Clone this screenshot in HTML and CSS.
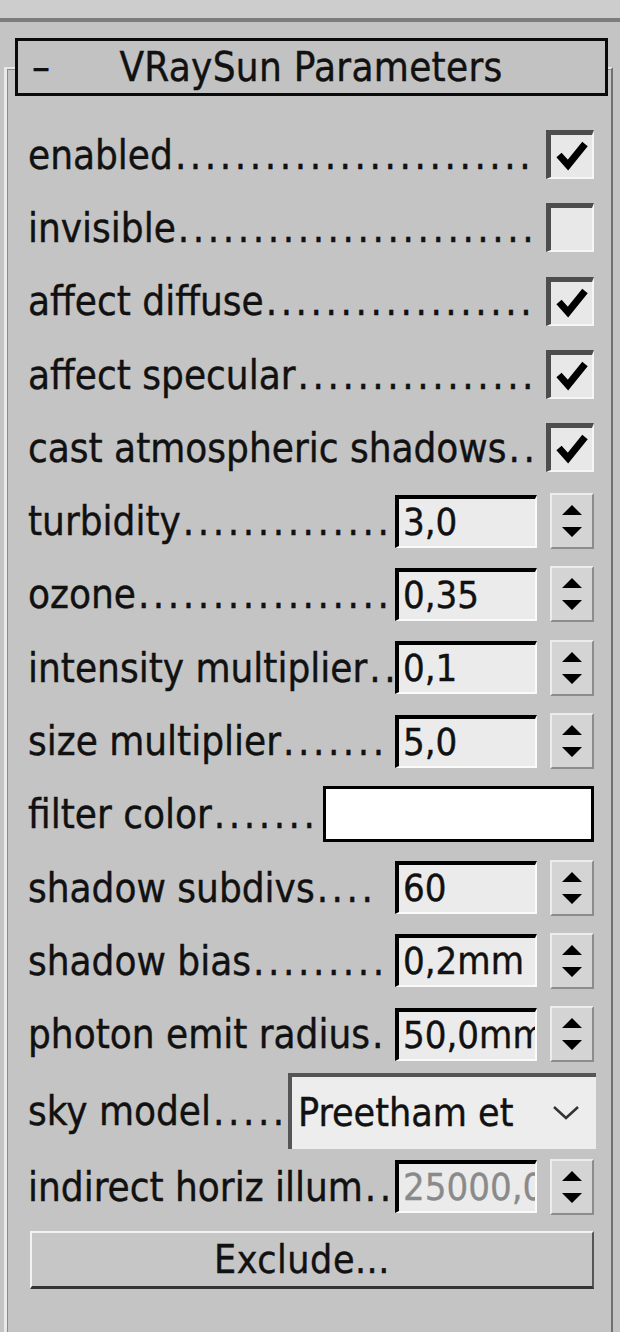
FILE: index.html
```html
<!DOCTYPE html>
<html>
<head>
<meta charset="utf-8">
<link rel="stylesheet" href="styles.css">
</head>
<body>
<div class="topbar"></div>
<div class="rollout">
  <div class="header"><span class="minus">–</span><span class="title">VRaySun Parameters</span></div>
  <div class="rows">
    <div class="row">
      <div class="label">enabled<span class="dots">........................</span></div>
      <div class="check"><svg viewBox="0 0 40 40" width="40" height="40"><path d="M7 19 L16 29 L33 8" fill="none" stroke="#000" stroke-width="7"/></svg></div>
    </div>
    <div class="row">
      <div class="label">invisible<span class="dots">........................</span></div>
      <div class="check"></div>
    </div>
    <div class="row">
      <div class="label">affect diffuse<span class="dots">..................</span></div>
      <div class="check"><svg viewBox="0 0 40 40" width="40" height="40"><path d="M7 19 L16 29 L33 8" fill="none" stroke="#000" stroke-width="7"/></svg></div>
    </div>
    <div class="row">
      <div class="label">affect specular<span class="dots">................</span></div>
      <div class="check"><svg viewBox="0 0 40 40" width="40" height="40"><path d="M7 19 L16 29 L33 8" fill="none" stroke="#000" stroke-width="7"/></svg></div>
    </div>
    <div class="row">
      <div class="label">cast atmospheric shadows<span class="dots">..</span></div>
      <div class="check"><svg viewBox="0 0 40 40" width="40" height="40"><path d="M7 19 L16 29 L33 8" fill="none" stroke="#000" stroke-width="7"/></svg></div>
    </div>
    <div class="row">
      <div class="label narrow">turbidity<span class="dots">..............</span></div>
      <div class="field">3,0</div>
      <div class="spin"><svg viewBox="0 0 40 52" width="40" height="52"><path d="M10 20 H30 L20 10 Z M10 32 H30 L20 42 Z" fill="#000"/></svg></div>
    </div>
    <div class="row">
      <div class="label narrow">ozone<span class="dots">.................</span></div>
      <div class="field">0,35</div>
      <div class="spin"><svg viewBox="0 0 40 52" width="40" height="52"><path d="M10 20 H30 L20 10 Z M10 32 H30 L20 42 Z" fill="#000"/></svg></div>
    </div>
    <div class="row">
      <div class="label narrow">intensity multiplier<span class="dots">..</span></div>
      <div class="field">0,1</div>
      <div class="spin"><svg viewBox="0 0 40 52" width="40" height="52"><path d="M10 20 H30 L20 10 Z M10 32 H30 L20 42 Z" fill="#000"/></svg></div>
    </div>
    <div class="row">
      <div class="label narrow">size multiplier<span class="dots">.......</span></div>
      <div class="field">5,0</div>
      <div class="spin"><svg viewBox="0 0 40 52" width="40" height="52"><path d="M10 20 H30 L20 10 Z M10 32 H30 L20 42 Z" fill="#000"/></svg></div>
    </div>
    <div class="row">
      <div class="label">filter color<span class="dots">.......</span></div>
      <div class="swatch"></div>
    </div>
    <div class="row">
      <div class="label narrow">shadow subdivs<span class="dots">....</span></div>
      <div class="field">60</div>
      <div class="spin"><svg viewBox="0 0 40 52" width="40" height="52"><path d="M10 20 H30 L20 10 Z M10 32 H30 L20 42 Z" fill="#000"/></svg></div>
    </div>
    <div class="row">
      <div class="label narrow">shadow bias<span class="dots">.........</span></div>
      <div class="field">0,2mm</div>
      <div class="spin"><svg viewBox="0 0 40 52" width="40" height="52"><path d="M10 20 H30 L20 10 Z M10 32 H30 L20 42 Z" fill="#000"/></svg></div>
    </div>
    <div class="row">
      <div class="label narrow">photon emit radius<span class="dots">.</span></div>
      <div class="field">50,0mm</div>
      <div class="spin"><svg viewBox="0 0 40 52" width="40" height="52"><path d="M10 20 H30 L20 10 Z M10 32 H30 L20 42 Z" fill="#000"/></svg></div>
    </div>
    <div class="row sky">
      <div class="label">sky model<span class="dots">.....</span></div>
      <div class="dropdown"><span class="dd-text">Preetham et</span><svg class="chev" viewBox="0 0 28 16" width="28" height="16"><path d="M2 2 L14 13 L26 2" fill="none" stroke="#333" stroke-width="2.5"/></svg></div>
    </div>
    <div class="row short">
      <div class="label narrow">indirect horiz illum<span class="dots">..</span></div>
      <div class="field disabled">25000,0</div>
      <div class="spin"><svg viewBox="0 0 40 52" width="40" height="52"><path d="M10 20 H30 L20 10 Z M10 32 H30 L20 42 Z" fill="#000"/></svg></div>
    </div>
    <div class="btn-row">
      <div class="button">Exclude...</div>
    </div>
  </div>
</div>
</body>
</html>
```
FILE: styles.css
```css
html, body {
  margin: 0;
  padding: 0;
}
body {
  width: 620px;
  height: 1332px;
  overflow: hidden;
  background: #c4c4c4;
  font-family: "DejaVu Sans Condensed", "Liberation Sans", sans-serif;
  font-size: 40px;
  color: #111;
  -webkit-text-stroke: 0.4px #111;
}
.topbar {
  height: 18px;
  background: #cdcdcd;
  border-bottom: 4px solid #7d7d7d;
}
.rollout {
  margin: 45px 7px 0 4px;
  border-top: 2px solid #e6e6e6;
  border-left: 3px solid #e9e9e9;
  border-right: 2px solid #707070;
  height: 1300px;
  box-shadow: inset 1px 1px 0 #8a8a8a;
}
.header {
  margin: -31px 3px 0 8px;
  height: 52px;
  border: 3px solid #0a0a0a;
  background: #c2c2c2;
  display: flex;
  align-items: center;
}
.minus {
  padding-left: 14px;
  width: 60px;
}
.title {
  flex: 1;
  text-align: center;
  padding-right: 75px;
  letter-spacing: 0.3px;
}
.rows {
  padding: 22px 17px 0 21px;
}
.row {
  height: 73.3px;
  display: flex;
  align-items: center;
}
.row.sky {
  height: 80px;
}
.row.short {
  height: 72px;
}
.label {
  flex: 1 1 0;
  min-width: 0;
  white-space: nowrap;
  margin-right: 8px;
}
.label.narrow {
  margin-right: 3px;
}
.dots {
  letter-spacing: 3.55px;
  margin-left: 2px;
}
.check {
  width: 41px;
  height: 42px;
  background: #e8e8e8;
  border-top: 5px solid #4d4d4d;
  border-left: 5px solid #4d4d4d;
  border-right: 2px solid #f6f6f6;
  border-bottom: 2px solid #f6f6f6;
  display: flex;
  align-items: center;
  justify-content: center;
}
.field {
  width: 132px;
  height: 47px;
  line-height: 47px;
  background: #ebebeb;
  border-top: 4px solid #000;
  border-left: 4px solid #000;
  border-right: 2px solid #fafafa;
  border-bottom: 2px solid #fafafa;
  padding-left: 4px;
  white-space: nowrap;
  overflow: hidden;
  font-size: 38px;
}
.field.disabled {
  color: #8a8a8a;
  -webkit-text-stroke: 0.3px #8a8a8a;
}
.spin {
  width: 40px;
  height: 52px;
  margin-left: 13px;
  background: #d4d4d4;
  border-top: 2px solid #ececec;
  border-left: 2px solid #ececec;
  border-right: 2px solid #8c8c8c;
  border-bottom: 2px solid #8c8c8c;
}
.spin svg {
  display: block;
}
.swatch {
  width: 265px;
  height: 50px;
  background: #fff;
  border: 3px solid #000;
}
.dropdown {
  width: 304px;
  height: 72px;
  margin-right: -2px;
  background: #ededed;
  border-top: 4px solid #555;
  border-left: 4px solid #555;
  display: flex;
  align-items: center;
}
.dd-text {
  padding-left: 6px;
  white-space: nowrap;
  width: 228px;
  font-size: 39px;
}
.chev {
  margin-left: 26px;
  flex: none;
}
.btn-row {
  padding-top: 8px;
  padding-left: 2px;
}
.button {
  height: 53px;
  line-height: 53px;
  text-align: center;
  background: #c6c6c6;
  border-top: 2px solid #f2f2f2;
  border-left: 2px solid #f2f2f2;
  border-right: 2px solid #555;
  border-bottom: 3px solid #333;
  font-size: 39px;
  padding-right: 20px;
  letter-spacing: 0.5px;
}
```
